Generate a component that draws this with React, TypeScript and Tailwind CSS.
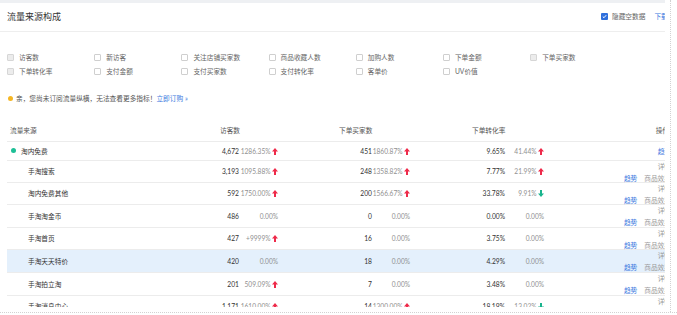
import React from 'react';

type Dir = 'up' | 'down' | undefined;
type Row = {
  name: string;
  top?: boolean;
  hl?: boolean;
  h: string;
  v: string; vc: string; vd?: Dir;
  b: string; bc: string; bd?: Dir;
  c: string; cc: string; cd?: Dir;
};

const rows: Row[] = [
  { name: '淘内免费', top: true, h: 'h-[19px]', v: '4,672', vc: '1286.35%', vd: 'up', b: '451', bc: '1860.87%', bd: 'up', c: '9.65%', cc: '41.44%', cd: 'up' },
  { name: '手淘搜索', h: 'h-[22px]', v: '3,193', vc: '1095.88%', vd: 'up', b: '248', bc: '1358.82%', bd: 'up', c: '7.77%', cc: '21.99%', cd: 'up' },
  { name: '淘内免费其他', h: 'h-[22px]', v: '592', vc: '1750.00%', vd: 'up', b: '200', bc: '1566.67%', bd: 'up', c: '33.78%', cc: '9.91%', cd: 'down' },
  { name: '手淘淘金币', h: 'h-[23px]', v: '486', vc: '0.00%', b: '0', bc: '0.00%', c: '0.00%', cc: '0.00%' },
  { name: '手淘首页', h: 'h-[22px]', v: '427', vc: '+9999%', vd: 'up', b: '16', bc: '0.00%', c: '3.75%', cc: '0.00%' },
  { name: '手淘天天特价', hl: true, h: 'h-[23px]', v: '420', vc: '0.00%', b: '18', bc: '0.00%', c: '4.29%', cc: '0.00%' },
  { name: '手淘拍立淘', h: 'h-[23px]', v: '201', vc: '509.09%', vd: 'up', b: '7', bc: '0.00%', c: '3.48%', cc: '0.00%' },
  { name: '手淘消息中心', h: 'h-[22px]', v: '1,171', vc: '1610.00%', vd: 'up', b: '14', bc: '1300.00%', bd: 'up', c: '18.19%', cc: '13.02%', cd: 'down' },
];

const checks: { label: string; disabled?: boolean }[][] = [
  [
    { label: '访客数', disabled: true },
    { label: '新访客' },
    { label: '关注店铺买家数' },
    { label: '商品收藏人数' },
    { label: '加购人数' },
    { label: '下单金额' },
    { label: '下单买家数', disabled: true },
  ],
  [
    { label: '下单转化率', disabled: true },
    { label: '支付金额' },
    { label: '支付买家数' },
    { label: '支付转化率' },
    { label: '客单价' },
    { label: 'UV价值' },
  ],
];

function Arrow({ dir }: { dir: Dir }) {
  if (!dir) return null;
  if (dir === 'up')
    return (
      <svg width="6" height="7" viewBox="0 0 6 7" className="ml-[1.5px] shrink-0">
        <polygon points="3,0 6,3.4 4,3.4 4,7 2,7 2,3.4 0,3.4" fill="#ee2a4a" />
      </svg>
    );
  return (
    <svg width="6" height="7" viewBox="0 0 6 7" className="ml-[1.5px] shrink-0">
      <polygon points="3,7 6,3.6 4,3.6 4,0 2,0 2,3.6 0,3.6" fill="#19b48d" />
    </svg>
  );
}

function Change({ text, dir, w }: { text: string; dir: Dir; w: string }) {
  return (
    <div className={`${w} flex items-center justify-end text-[6.6px] text-[#909090]`}>
      <span>{text}</span>
      <Arrow dir={dir} />
    </div>
  );
}

function Box({ disabled }: { disabled?: boolean }) {
  return (
    <span
      className={
        disabled
          ? 'w-[7px] h-[7px] rounded-[1px] border border-[#d6d6d6] bg-[#ececec] shrink-0'
          : 'w-[7px] h-[7px] rounded-[1px] border border-[#cfcfcf] bg-white shrink-0'
      }
    />
  );
}

export default function App() {
  return (
    <div className="w-[677px] h-[315px] overflow-hidden bg-white flex flex-col [font-family:Lato,'Noto_Sans_CJK_SC',sans-serif] text-[6.7px] leading-none text-[#444]">
      <div className="h-[312px] shrink-0 flex">
        <div className="w-[665px] h-[307px] shrink-0 overflow-hidden flex flex-col">
          <div className="h-[3px] bg-[#eef0f3] shrink-0" />
          {/* title bar */}
          <div className="h-[29px] shrink-0 border-b border-[#eeeeee] flex items-center justify-between pl-[7px] pb-[1px]">
            <span className="text-[9px] text-[#333]">流量来源构成</span>
            <div className="flex items-center w-[64px] shrink-0 overflow-hidden whitespace-nowrap">
              <span className="w-[7px] h-[7px] rounded-[1px] bg-[#2f6fdc] flex items-center justify-center shrink-0">
                <svg width="5" height="5" viewBox="0 0 5 5">
                  <polyline points="0.8,2.6 2,3.7 4.2,1.2" fill="none" stroke="#fff" strokeWidth="1" />
                </svg>
              </span>
              <span className="ml-[4px] text-[#666]">隐藏空数据</span>
              <span className="ml-[9px] text-[#3a78e0]">下载</span>
            </div>
          </div>
          {/* checkbox grid */}
          <div className="pt-[18px] pl-[7px] flex flex-col shrink-0">
            {checks.map((line, i) => (
              <div key={i} className="h-[14px] flex items-center">
                {line.map((c) => (
                  <div key={c.label} className="w-[87.2px] shrink-0 flex items-center gap-[5px] text-[#666]">
                    <Box disabled={c.disabled} />
                    <span>{c.label}</span>
                  </div>
                ))}
              </div>
            ))}
          </div>
          {/* notice */}
          <div className="mt-[13px] h-[14px] pl-[8px] flex items-center shrink-0 text-[#555]">
            <span className="w-[5px] h-[5px] rounded-full bg-[#f5b623] shrink-0" />
            <span className="ml-[3px]">亲，您尚未订阅流量纵横，无法查看更多指标！</span>
            <span className="text-[#3a78e0]">立即订购 »</span>
          </div>
          {/* table */}
          <div className="mt-[14px] ml-[7px] w-[680px] shrink-0 flex flex-col">
            <div className="h-[23px] border-b border-[#ececec] flex items-center text-[#555]">
              <div className="w-[203px] pl-[3px]">流量来源</div>
              <div className="w-[120px] pl-[10px]">访客数</div>
              <div className="w-[132px] pl-[9px]">下单买家数</div>
              <div className="w-[82px] pl-[10px]">下单转化率</div>
              <div className="w-[127px] text-right pr-[2px]">操作</div>
            </div>
            {rows.map((r) => (
              <div
                key={r.name}
                className={`${r.h} shrink-0 border-b border-[#ececec] flex items-center ${r.hl ? 'bg-[#e4f0fc]' : ''}`}
              >
                {r.top ? (
                  <div className="w-[203px] pl-[4px] flex items-center gap-[5px] text-[#333]">
                    <span className="w-[5px] h-[5px] rounded-full bg-[#1dbf96] shrink-0" />
                    <span>{r.name}</span>
                  </div>
                ) : (
                  <div className="w-[203px] pl-[21px] text-[#333]">{r.name}</div>
                )}
                <div className="w-[29px] text-right text-[#333]">{r.v}</div>
                <Change text={r.vc} dir={r.vd} w="w-[39px]" />
                <div className="w-[52px]" />
                <div className="w-[42px] text-right text-[#333]">{r.b}</div>
                <Change text={r.bc} dir={r.bd} w="w-[38px]" />
                <div className="w-[52px]" />
                <div className="w-[43px] text-right text-[#333]">{r.c}</div>
                <Change text={r.cc} dir={r.cd} w="w-[39px]" />
                {r.top ? (
                  <div className="w-[127px] text-right text-[#3a78e0]">趋势</div>
                ) : (
                  <div className="w-[127px] flex flex-col items-end leading-[12px]">
                    <span className="text-[#999]">详情</span>
                    <span>
                      <span className="text-[#3a78e0]">趋势</span>
                      <span className="ml-[7px] text-[#999]">商品效果</span>
                    </span>
                  </div>
                )}
              </div>
            ))}
          </div>
        </div>
        <div className="w-[5px] shrink-0" />
        <div className="h-full border-l border-dotted border-[#d2d2d2]" />
      </div>
      <div className="w-full border-t border-dotted border-[#d2d2d2]" />
    </div>
  );
}
